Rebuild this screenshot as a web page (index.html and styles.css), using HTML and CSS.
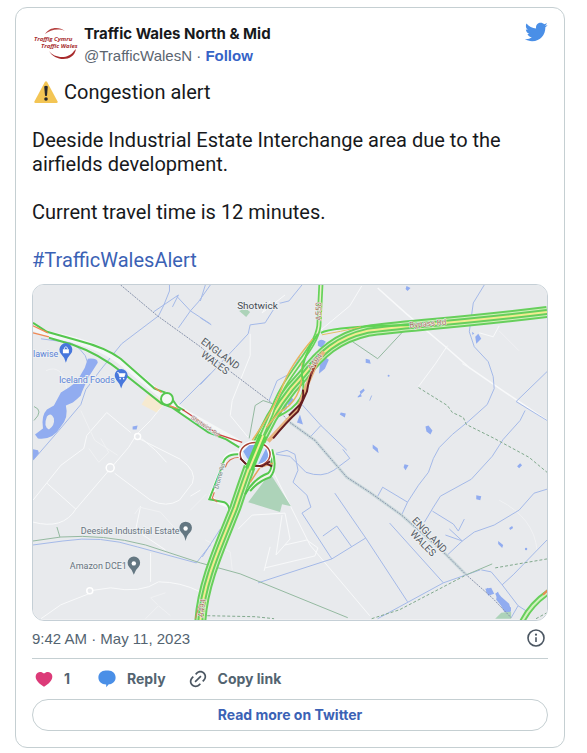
FILE: index.html
```html
<!DOCTYPE html>
<html lang="en">
<head>
<meta charset="utf-8">
<meta name="viewport" content="width=device-width, initial-scale=1">
<title>Traffic Wales North &amp; Mid</title>
<link rel="stylesheet" href="styles.css">
</head>
<body>
<article class="card">
  <header class="header">
    <svg class="avatar" viewBox="0 0 48 48" role="img" aria-label="Traffig Cymru Traffic Wales">
      <path d="M13 10C17 3 27 2 33 7C26 4 18 6 13 10Z" fill="#b5403f"/>
      <path d="M17 27C22 34 36 36 42 27L44 25C42 38 23 38 17 27Z" fill="#a82a2c"/>
      <text class="logo-text" x="2" y="17">Traffig Cymru</text>
      <text class="logo-text" x="9" y="24">Traffic Wales</text>
    </svg>
    <div class="author">
      <a class="name" href="#">Traffic Wales North &amp; Mid</a>
      <div class="handle-row"><a class="handle" href="#">@TrafficWalesN</a> · <a class="follow" href="#">Follow</a></div>
    </div>
    <a class="brand" href="#" aria-label="Twitter">
      <svg viewBox="0 0 24 24"><path d="M23.643 4.937c-.835.37-1.732.62-2.675.733.962-.576 1.7-1.49 2.048-2.578-.9.534-1.897.922-2.958 1.13-.85-.904-2.06-1.47-3.4-1.47-2.572 0-4.658 2.086-4.658 4.66 0 .364.042.718.12 1.06-3.873-.195-7.304-2.05-9.602-4.868-.4.69-.63 1.49-.63 2.342 0 1.616.823 3.043 2.072 3.878-.764-.025-1.482-.234-2.11-.583v.06c0 2.257 1.605 4.14 3.737 4.568-.392.106-.803.162-1.227.162-.3 0-.593-.028-.877-.082.593 1.85 2.313 3.198 4.352 3.234-1.595 1.25-3.604 1.995-5.786 1.995-.376 0-.747-.022-1.112-.065 2.062 1.323 4.51 2.093 7.14 2.093 8.57 0 13.255-7.098 13.255-13.254 0-.2-.005-.402-.014-.602.91-.658 1.7-1.477 2.323-2.41z"/></svg>
    </a>
  </header>

  <div class="message">
    <p class="alert"><svg class="warning" viewBox="0 0 24 24" role="img" aria-label="Warning"><path d="M11 1.800Q12 .5 13 1.800L23.600 21.400Q24 23 22.500 23H1.500Q0 23 .4 21.400Z" fill="#f3c554"/><path d="M10.200 6.500Q12 5.200 13.800 6.500L13 15.500Q12 16.500 11 15.500Z" fill="#28292d"/><circle cx="12" cy="19" r="1.800" fill="#28292d"/></svg>Congestion alert</p>
    <p>Deeside Industrial Estate Interchange area due to the airfields development.</p>
    <p>Current travel time is 12 minutes.</p>
    <p><a href="#">#TrafficWalesAlert</a></p>
  </div>

  <svg class="map" viewBox="32 284 516 336" role="img" aria-label="Traffic map of the Deeside Industrial Estate Interchange">
    <rect x="32" y="284" width="516" height="336" fill="#e8eaed"/>
    <!-- minor roads -->
    <g class="minor">
      <path d="M166 400L150 420L136 434L128 447L75 509Q62 530 32 522"/>
      <path d="M130 432L106 412L86 435L83 448L60 465L32 500M136 437L180 459Q197 471 192 483L179 500Q166 508 150 500L114 473M46 483L75 509M141 438L155 450L166 462"/>
      <path d="M89 591L110 588Q140 594 158 582Q180 582 200 592M88 594L60 605L40 619" />
      <path d="M378 287L407 313L445 345L470 367L505 391L548 420" stroke-width="1.500"/>
      <path d="M320 330L350 305L362 285M250 333V355L232 400L230 415L248 437M270 300L262 312L285 294"/>
      <path d="M448 345L436 363L419 386M463 363L470 367M480 332L494 336L500 325"/>
      <path d="M270 465L290 505L310 545L370 616"/>
      <path d="M238 529L252 515L285 513L290 539L276 555L282 515M265 568L315 556L318 548L307 540L285 545M264 571L270 547"/>
      <path d="M140 506L135 530L165 550M190 496L200 490M150 553V582"/>
    </g>
    <g class="faint">
      <path d="M45 370Q62 362 66 390M80 410L94 440L117 455M100 438L108 452L98 462L88 448M190 510L206 494M134 514L139 507L160 512L176 530"/>
      <path d="M145 619L158 606L170 616M157 605L150 598L165 593M205 540L230 552L232 570M500 500Q535 518 538 550M520 350L500 330"/>
    </g>
    <circle cx="109.500" cy="467.500" r="4" fill="#e8eaed" stroke="#fff" stroke-width="1.500"/>
    <circle cx="137" cy="436" r="3" fill="#e8eaed" stroke="#fff" stroke-width="1.500"/>
    <circle cx="89" cy="591" r="3" fill="#e8eaed" stroke="#fff" stroke-width="1.500"/>
    <path d="M148 393L165 402L156 412L141 404Z" fill="#f6ead0"/>

    <!-- water -->
    <g class="stream">
      <path d="M169 284V290L163 305L158 315L121 343L100 369L85 389L80 404L58 430L32 460"/>
      <path d="M153 311L178 294L172 306M176 295L190 310L178 327M190 310L210 323M210 284L198 301L190 310M210 373L179 404M200 384L235 347L248 333L250 324L265 322L277 303L289 300L302 284M205 284L200 300M200 317L211 324"/>
      <path d="M269 400L277 380L290 373L300 356M302 404L321 425L347 450M321 425L309 438"/>
      <path d="M485 284L474 302L470 331L475 346L489 361L494 376L495 388L488 404L469 421L453 434L440 447L434 458L429 472L419 485L408 502L402 515M377 498L383 487L408 502M548 371L517 401L548 420M526 410L521 420L504 439L493 456L472 479L441 496L434 507L425 522"/>
      <path d="M372 395L370 400M433 511L454 524L459 531L465 519M446 535L463 541L450 529M447 556L463 541L475 532L495 525L520 510L535 493L548 489"/>
      <path d="M276 453L287 450L295 454L298 470L293 482L307 495L311 507L302 513L332 559L258 583M335 493L366 538L332 559M323 536L337 526L352 547M366 538L408 602M276 454L290 456L306 472Q322 478 334 470L350 458L343 449M390 523L444 583M548 540L514 575L503 585M482 570L492 572L503 585L519 606L512 618M519 606L530 613"/>
      <path d="M32 545L62 541Q100 535 137 547L196 563L210 545M202 557L220 529M378 619L444 583L481 570"/>
      <path d="M40 338L70 342Q91 354 86 370L82 387"/>
    </g>
    <g fill="#91acf0">
      <path fill-rule="evenodd" d="M87 358Q97 357 97 362L88 376Q80 393 80 395Q76 399 72 402L65 405Q68 417 60 426Q52 440 37 438L34 434L42 428Q40 415 46 409L53 405L60 392L68 387L76 381L84 367ZM46 416Q50 411 53 418Q54 425 48 429Q42 426 46 416Z"/>
      <path d="M32 449L37 450L38 453L32 460ZM132 426L137 425L136 429L132 429ZM318 341Q321 337 326 341L322 347L318 345ZM320 364L326 357L329 359L325 368L319 373ZM366 358L370 359L371 363L366 362ZM360 391L364 388L365 390L361 394ZM358 396L361 393L362 396L358 397ZM341 412L346 413L345 417L340 414ZM297 422L300 414L303 424ZM373 444L378 448L379 453L373 448ZM407 285L411 287L408 290L406 288ZM473 331L475 333L473 334ZM476 336L479 333L482 338L477 343ZM426 426L429 425L433 430L431 434L427 431ZM405 464L409 465L406 470L404 467ZM477 495L482 496L481 500L477 499ZM518 466L521 463L523 465L520 468ZM510 528L513 526L514 528L511 530ZM499 541L504 545L503 548L499 544ZM486 589L492 588L495 594L489 596ZM496 594L499 592L500 599L512 608L511 615L505 612ZM287 404L291 397L294 399L290 405ZM283 408L287 404L287 408L284 411Z"/>
      <path d="M498 592L502 597L510 604L512 611L508 613L502 606L497 600ZM488 588L492 591L490 595L487 592Z"/>
      <circle cx="389" cy="375" r="1"/><circle cx="527" cy="549" r="1.200"/>
    </g>
    <!-- parks, footpaths and the national border -->
    <g fill="#add3b9">
      <path d="M270 473L291 506L282 504L280 512L248 502Z"/><path d="M239 310L245 307L250 311L246 316Z"/><path d="M502 613L512 612V619H496Z"/>
    </g>
    <g class="path">
      <path d="M32 541L60 537Q103 534 145 545L200 563L240 574L348 618M59 537L56 527M249 438L255 405L263 400L272 403M335 346L350 339L378 358L405 329M33 406Q43 410 33 420M467 575L493 564"/>
      <g class="dashed"><path d="M419 387L448 405L453 412L464 417L467 424L495 438L530 457L548 472M372 619L400 610L467 575M496 568L548 559M207 616L255 617L274 619M537 619L548 613"/></g>
    </g>
    <path class="border-band" d="M290 422L315 440L347 477L370 492L402 515L447 555L467 575"/>
    <path class="border-line" d="M120 284L157 315L200 346L225 367L270 401L290 422L315 440L347 477L370 492L402 515L447 555L467 575L493 598L512 618"/>

    <!-- west road -->
    <path d="M32 327L50 334Q95 342 120 361L166 399L185 412L240 443" class="road-base"/>
    <g class="green thin">
      <path d="M32 322L46 331L78 340Q105 347 120 358L154 388L165 392M48 337L72 344Q98 353 122 372L161 403L180 410M172 399L177 406L184 410M170 406L208 432L226 439L239 447"/>
      <circle cx="166.500" cy="398.500" r="6" fill="#f5f7f7"/>
    </g>
    <g fill="none" stroke="#ef8954" stroke-width="1.300"><path d="M32 325L47 332M32 332L48 336M154 387L161 392M169 405L177 408"/></g>
    <path d="M182 409L200 421L218 434L242 442" fill="none" stroke="#cb4840" stroke-width="1.400"/>

    <!-- local loop beside the interchange -->
    <path d="M240 453Q224 452 224 463L210 497L214 500L229 506L230 515" fill="none" stroke="#f7f9f8" stroke-width="4"/>
    <path class="green thin" d="M239 454Q224 453 222 466L209 499L224 502Q232 506 228 520"/>
    <path d="M242 457Q228 456 225 467M214 492L212 498L217 502" fill="none" stroke="#dc7655" stroke-width="1.200"/>

    <!-- trunk roads -->
    <path class="trunk-outer" d="M200 622C202 585 219 548 235 508C250 464 264 415 303 375C321 352 337 337 368 330C400 325 450 323 548 311"/>
    <path class="trunk-pale" d="M200 622C202 585 219 548 235 508C250 464 264 415 303 375C321 352 337 337 368 330C400 325 450 323 548 311"/>
    <path class="trunk-mid" d="M200 622C202 585 219 548 235 508C250 464 264 415 303 375C321 352 337 337 368 330C400 325 450 323 548 311"/>
    <path class="trunk-inner" d="M200 622C202 585 219 548 235 508C250 464 264 415 303 375C321 352 337 337 368 330C400 325 450 323 548 311"/>
    <g fill="none">
      <path d="M321 284L319 325C316 350 283 374 271 414L257 446" stroke="#67d35b" stroke-width="5"/>
      <path d="M321 284L319 325C316 350 283 374 271 414L257 446" stroke="#e8f0cb" stroke-width="1.500"/>
      <path d="M313 338Q290 365 282 387T252 440M302 362Q305 399 279 412L266 427" stroke="#e7b65f" stroke-width="1.500"/>
      <path d="M318 333Q302 356 302 375Q310 401 278 416M321 332Q332 327 380 325L430 324" stroke="#60d354" stroke-width="2"/>
      <path d="M322 334Q340 331 361 326" stroke="#e5bf62"/>
      <path d="M249 490Q257 479 268 475Q277 466 272 452" stroke="#f3f5eb" stroke-width="5"/>
      <path d="M245 494Q254 478 268 473Q274 467 270 453M250 491Q258 481 270 477Q278 468 272 449" class="green thin"/>
      <path d="M250 482L260 467L273 463" stroke="#e8a05c" stroke-width="1.500"/>
      <path d="M268 441Q285 422 298 409L306 387L317 361L324 351" stroke="#e8b480" stroke-width="4"/>
      <path d="M318 359Q309 375 307 391L298 411Q286 422 273 438M303 389Q305 401 297 407L289 415" stroke="#651e22" stroke-width="2"/>
      <path d="M317 360L311 374" stroke="#a34b44" stroke-width="1.500"/>
    </g>
    <ellipse cx="255" cy="454" rx="15" ry="12" fill="#dfe9f6" stroke="#fff" stroke-width="4"/>
    <path d="M249 445L243 451L247 458L253 462L259 444ZM266 448L258 464Q269 461 268 454Z" fill="#87aaf0"/>
    <ellipse cx="255" cy="454" rx="15" ry="12" fill="none" stroke="#a84538" stroke-width="1.500"/>
    <path d="M240 458L246 464M250 465L262 466L270 461M266 463L272 466" fill="none" stroke="#681f23" stroke-width="2"/>
    <path d="M249 469L263 435" stroke="#5bd34e" stroke-width="9"/><path d="M249 469L263 435" stroke="#f5ef98" stroke-width="2"/>
    <path d="M195 619L199 605" stroke="#df815d"/>
    <path d="M523 622Q532 604 550 592" class="trunk-outer corner"/><path d="M523 622Q532 604 550 592" class="trunk-pale corner"/><path d="M544 595L549 590" stroke="#ed8852" stroke-width="2"/>

    <!-- place names -->
    <text class="town" x="237" y="308">Shotwick</text>
    <g class="country">
      <text transform="translate(200 342) rotate(37)">ENGLAND</text><text transform="translate(200 355) rotate(37)">WALES</text>
      <text transform="translate(412 521) rotate(46)">ENGLAND</text><text transform="translate(410 534) rotate(46)">WALES</text>
    </g>
    <g class="road-name">
      <text transform="translate(410 327) rotate(-5)">Bypass Rd</text>
      <text transform="translate(321 320) rotate(-88)">A550</text>
      <text transform="translate(311 370) rotate(-50)">A494</text>
      <text transform="translate(203 618) rotate(-82)">A494</text>
      <text class="small-road" transform="translate(190 418) rotate(34)">Shotwick Rd</text>
      <text class="small-road local-road" transform="translate(218 489) rotate(-75)">Drome Rd</text>
    </g>
    <g class="shop"><text x="32" y="356">lawise</text><text x="58" y="382">Iceland Foods</text></g>
    <g class="place"><text x="80" y="534">Deeside Industrial Estate</text><text x="69" y="569">Amazon DCE1</text></g>
    <g fill="#4777dc">
      <path d="M65 362Q64 357 60 353A6.500 6.500 0 1 1 70 353Q66 357 65 362Z"/>
      <path d="M120.500 388Q119.500 383 115.500 379A6.500 6.500 0 1 1 125.500 379Q121.500 383 120.500 388Z"/>
    </g>
    <path d="M62 348.500H68V352.500H62Z" fill="#fff"/>
    <path d="M63.500 348.500V347Q65 345 66.500 347V348.500" fill="none" stroke="#fff" stroke-width=".8"/>
    <path d="M116.500 372H118L119 376H123.500L124.500 373H118.500" fill="#fff" stroke="#fff" stroke-width=".8"/>
    <circle cx="119.500" cy="378" r=".8" fill="#fff"/><circle cx="123" cy="378" r=".8" fill="#fff"/>
    <g fill="#647782">
      <path d="M185.200 541Q184 535 180.500 532A6.300 6.300 0 1 1 190 532Q186.400 535 185.200 541Z"/>
      <path d="M133.200 575Q132 570 128.500 567A6.300 6.300 0 1 1 138 567Q134.400 570 133.200 575Z"/>
    </g>
    <circle cx="185.200" cy="528.500" r="2.200" fill="#fff"/><circle cx="133.200" cy="563.500" r="2.200" fill="#fff"/>
  </svg>

  <div class="meta">
    <a class="time" href="#">9:42 AM · May 11, 2023</a>
    <a class="info" href="#" aria-label="Twitter Ads info and privacy"><svg viewBox="0 0 20 20"><circle cx="10" cy="10" r="8" fill="none" stroke="currentColor" stroke-width="1.600"/><circle cx="10" cy="6.700" r="1.100"/><path d="M9.200 9.200H10.800V14H9.200Z"/></svg></a>
  </div>
  <div class="actions">
    <button class="like" type="button" aria-label="Like"><svg viewBox="0 0 24 24"><path d="M20.884 13.190c-1.351 2.480-4.001 5.120-8.379 7.670l-.503.3-.504-.3c-4.379-2.550-7.029-5.190-8.382-7.670-1.360-2.500-1.410-4.860-.514-6.670.887-1.790 2.647-2.910 4.601-3.010 1.651-.09 3.368.56 4.798 2.010 1.429-1.450 3.146-2.100 4.796-2.010 1.954.1 3.714 1.220 4.601 3.010.896 1.810.846 4.170-.514 6.670z"/></svg><span>1</span></button>
    <button class="reply" type="button"><svg viewBox="0 0 20 20"><path d="M8.600 1.500H11.400C15.500 1.500 18.600 4.500 18.600 8.400C18.600 12.200 15.700 15 11.800 15.300L9.200 18.200V15.400C4.500 15.400 1.400 12.300 1.400 8.400C1.400 4.500 4.500 1.500 8.600 1.500Z"/></svg><span>Reply</span></button>
    <button class="copy" type="button"><svg viewBox="0 0 24 24"><path d="M18.360 5.640c-1.950-1.960-5.110-1.960-7.070 0L9.880 7.050 8.460 5.640l1.420-1.420c2.730-2.730 7.160-2.730 9.900 0 2.730 2.740 2.730 7.170 0 9.900l-1.420 1.420-1.410-1.420 1.410-1.410c1.960-1.960 1.960-5.120 0-7.070zm-2.120 3.530l-7.070 7.070-1.410-1.410 7.070-7.070 1.410 1.410zm-12.020.71l1.420-1.420 1.410 1.420-1.410 1.410c-1.960 1.960-1.960 5.120 0 7.070 1.950 1.960 5.110 1.960 7.070 0l1.410-1.410 1.420 1.410-1.420 1.420c-2.730 2.730-7.160 2.730-9.900 0-2.730-2.740-2.730-7.170 0-9.900z"/></svg><span>Copy link</span></button>
  </div>
  <a class="more" href="#">Read more on Twitter</a>
</article>
</body>
</html>
```
FILE: styles.css
```css
* {
  box-sizing: border-box;
}

body {
  margin: 0;
  padding: 7px 22px 5px 15px;
  background: #fff;
  color: #17191c;
  font-family: Inter, "Liberation Sans", sans-serif;
}

a {
  color: #3b62b5;
  text-decoration: none;
}

svg {
  display: block;
}

.card {
  padding: 16px;
  border: 1px solid #c5cfd2;
  border-radius: 12px;
}

.header {
  display: flex;
  align-items: flex-start;
  height: 56px;
}

.avatar {
  width: 48px;
  height: 48px;
  margin-right: 4px;
  flex: none;
}

.logo-text {
  fill: #a82e30;
  font: italic bold 6px "Open Sans", sans-serif;
}

.author {
  flex: 1;
  color: #536471;
  font-size: 15px;
  line-height: 24px;
}

.name {
  display: block;
  color: #17191c;
  font-weight: 700;
  line-height: 20px;
}

.handle-row {
  font-family: "Liberation Sans", sans-serif;
}

.handle {
  color: #5b6570;
}

.follow {
  color: #3563c7;
  font-weight: 700;
}

.brand svg {
  width: 24px;
  height: 24px;
  margin-top: -4px;
  fill: #4a8fe7;
}

.message {
  font-family: Roboto, "Liberation Sans", sans-serif;
  font-size: 20px;
  line-height: 24px;
}

.message p {
  margin: 0 0 24px;
}

.message p:last-child {
  margin-bottom: 12px;
}

.alert {
  display: flex;
  align-items: center;
}

.warning {
  width: 24px;
  height: 24px;
  margin: 0 6px 0 2px;
}

.map {
  width: 100%;
  height: auto;
  border: 1px solid #c5cfd6;
  border-radius: 12px;
}

.minor,
.faint,
.stream,
.path {
  fill: none;
}

.minor {
  stroke: #f8f9fa;
}

.faint {
  stroke: #f0f1f3;
}

.stream {
  stroke: #a4b9e8;
}

.path {
  stroke: #94b9a0;
}

.dashed {
  stroke: #81a98d;
  stroke-dasharray: 3 2;
}

.border-band {
  fill: none;
  stroke: #ccdadc;
  stroke-width: 3;
}

.border-line {
  fill: none;
  stroke: #8994ac;
  stroke-dasharray: 2 1;
}

.road-base {
  fill: none;
  stroke: #f5f7f7;
  stroke-width: 6;
}

.green {
  fill: none;
  stroke: #55c74f;
}

.thin {
  stroke-width: 2;
}

.trunk-outer,
.trunk-pale,
.trunk-mid,
.trunk-inner {
  fill: none;
  stroke: #67cf5c;
  stroke-width: 12;
}

.trunk-pale {
  stroke: #d2f0bd;
  stroke-width: 8;
}

.trunk-mid {
  stroke-width: 6;
}

.trunk-inner {
  stroke: #f2eb91;
  stroke-width: 2;
}

.trunk-outer.corner {
  stroke-width: 6;
}

.trunk-pale.corner {
  stroke-width: 2;
}

.town,
.country,
.road-name,
.shop,
.place {
  font-family: Roboto, sans-serif;
  font-size: 9px;
  paint-order: stroke;
  stroke: #edf0f2;
  stroke-width: 2px;
}

.town {
  fill: #454b52;
  font-size: 10px;
}

.country {
  fill: #555b63;
  font-size: 10px;
}

.road-name {
  fill: #a57561;
  font-size: 8px;
  stroke-width: 1px;
}

.small-road {
  fill: #a06f6c;
  font-size: 6px;
}

.local-road {
  fill: #77817b;
}

.shop {
  fill: #5c83d7;
}

.place {
  fill: #68747f;
}

.meta {
  display: flex;
  align-items: center;
  justify-content: space-between;
  height: 38px;
  padding-bottom: 2px;
  border-bottom: 1px solid #c5cfd2;
}

.time {
  color: #536471;
  font-family: "Liberation Sans", sans-serif;
  font-size: 15px;
}

.info {
  margin-right: 2px;
  color: #4b5662;
}

.info svg {
  width: 20px;
  height: 20px;
  fill: currentColor;
}

.actions {
  display: flex;
  align-items: center;
  height: 40px;
  padding-left: 2px;
  gap: 22px;
}

.actions button {
  display: flex;
  align-items: center;
  gap: 10px;
  padding: 0;
  border: 0;
  background: none;
  color: #536471;
  font: 700 14px/20px Inter, "Liberation Sans", sans-serif;
}

.actions .like {
  min-width: 41px;
}

.actions svg {
  width: 20px;
  height: 20px;
  fill: #4b5662;
}

.actions .like svg {
  fill: #dc3a78;
}

.actions .reply svg {
  fill: #4a8fe7;
}

.more {
  display: flex;
  align-items: center;
  justify-content: center;
  height: 32px;
  border: 1px solid #c5cfd2;
  border-radius: 16px;
  font-size: 14px;
  font-weight: 700;
}
```
